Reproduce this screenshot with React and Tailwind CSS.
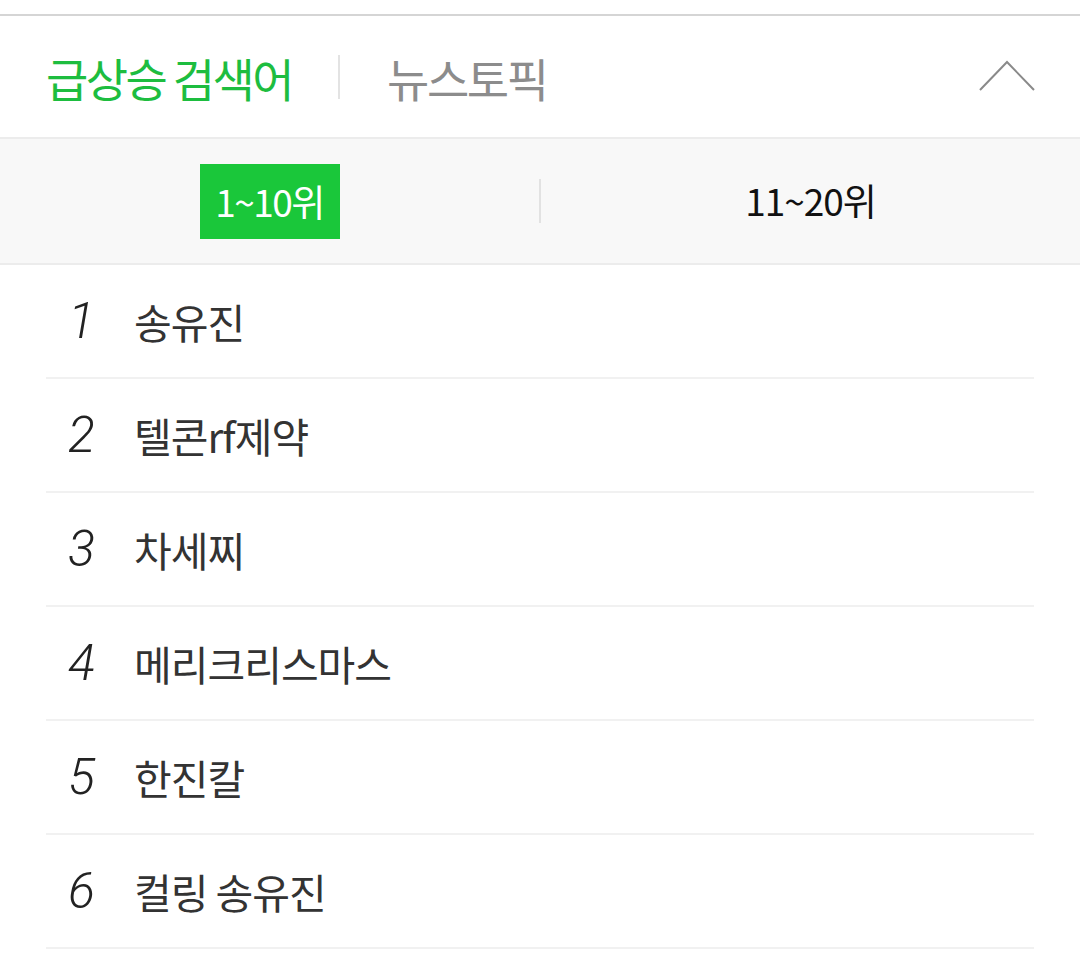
import React from "react";

const items = ["송유진", "텔콘rf제약", "차세찌", "메리크리스마스", "한진칼", "컬링 송유진"];

export default function App() {
  const kr = { fontFamily: '"Noto Sans CJK KR", "Noto Sans", sans-serif' };
  return (
    <div className="w-[1080px] h-[956px] bg-white overflow-hidden" style={kr}>
      <div className="h-[14px]" />
      <div className="h-[2px] bg-[#d5d5d5]" />
      <div className="h-[123px] flex items-center px-[46px] border-b-2 border-[#ececec]">
        <span className="text-[46px] leading-none text-[#1dbd3f] tracking-[-2.6px] font-normal">급상승 검색어</span>
        <span className="w-[2px] h-[44px] bg-[#e3e3e3] ml-[46px] mr-[47px]" />
        <span className="text-[46px] leading-none text-[#8c8c8c] tracking-[-2.4px] font-normal">뉴스토픽</span>
        <div className="ml-auto mr-[-2px]">
          <svg width="58" height="34" viewBox="0 0 58 34">
            <polyline points="2,30 29,2 56,30" fill="none" stroke="#8a8a8a" strokeWidth="2" />
          </svg>
        </div>
      </div>
      <div className="h-[126px] bg-[#f8f8f8] flex items-center border-b-2 border-[#ececec]">
        <div className="flex-1 flex justify-center">
          <div className="w-[140px] h-[75px] mt-[1px] bg-[#1ac73a] flex items-center justify-center text-white text-[37px] tracking-[-1.5px] font-normal">
            1~10위
          </div>
        </div>
        <div className="w-[2px] h-[44px] bg-[#e2e2e2]" />
        <div className="flex-1 flex justify-center">
          <div className="text-[37px] text-[#111] tracking-[-1px] font-normal">11~20위</div>
        </div>
      </div>
      <div className="mx-[46px]">
        {items.map((t, i) => (
          <div key={i} className="h-[114px] flex items-center border-b-2 border-[#f1f1f1]">
            <span
              className="w-[88px] pl-[22px] text-[50px] italic text-[#222] leading-none"
              style={{ fontFamily: 'Roboto, "Noto Sans", sans-serif', fontWeight: 300 }}
            >
              {i + 1}
            </span>
            <span className="text-[41px] text-[#333] tracking-[-1px] leading-none">{t}</span>
          </div>
        ))}
      </div>
    </div>
  );
}
